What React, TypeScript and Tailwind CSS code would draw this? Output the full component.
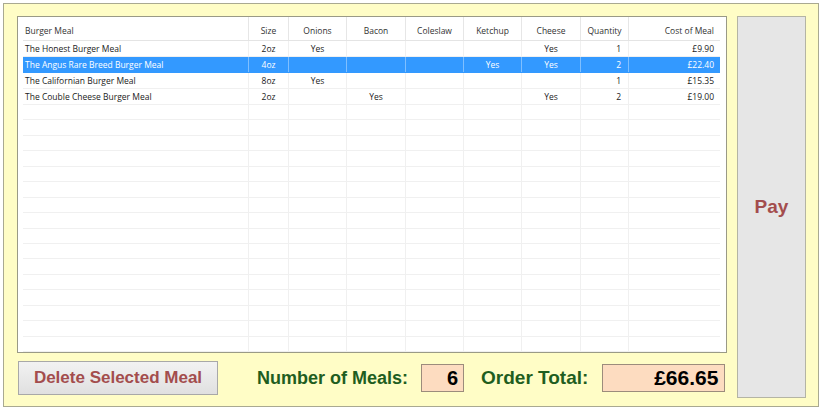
const columns = [
  { label: 'Burger Meal', width: 'w-[226px]', align: 'text-left pl-[2px]' },
  { label: 'Size', width: 'w-[40px]', align: 'text-center' },
  { label: 'Onions', width: 'w-[58px]', align: 'text-center' },
  { label: 'Bacon', width: 'w-[59px]', align: 'text-center' },
  { label: 'Coleslaw', width: 'w-[58px]', align: 'text-center' },
  { label: 'Ketchup', width: 'w-[58px]', align: 'text-center' },
  { label: 'Cheese', width: 'w-[59px]', align: 'text-center' },
  { label: 'Quantity', width: 'w-[48px]', align: 'text-center' },
  { label: 'Cost of Meal', width: 'flex-1', align: 'text-right pr-[6px]' },
];

const cellAlign = [
  'text-left pl-[2px]',
  'text-center',
  'text-center',
  'text-center',
  'text-center',
  'text-center',
  'text-center',
  'text-right pr-[7px]',
  'text-right pr-[6px]',
];

const meals = [
  ['The Honest Burger Meal', '2oz', 'Yes', '', '', '', 'Yes', '1', '£9.90'],
  ['The Angus Rare Breed Burger Meal', '4oz', '', '', '', 'Yes', 'Yes', '2', '£22.40'],
  ['The Californian Burger Meal', '8oz', 'Yes', '', '', '', '', '1', '£15.35'],
  ['The Couble Cheese Burger Meal', '2oz', '', 'Yes', '', '', 'Yes', '2', '£19.00'],
];

const selected = 1;
const totalRows = 20;

function MealGrid() {
  const rows = Array.from({ length: totalRows }, (_, i) => meals[i] ?? Array(9).fill(''));
  return (
    <div className="h-[337px] flex flex-col border border-[#9a9a86] bg-white pl-[5px] pr-[6px] text-[8.5px] font-['Open_Sans',sans-serif]">
      <div className="h-[24px] flex border-b border-[#e4e4e4] text-[#333]">
        {columns.map((c, i) => (
          <div
            key={c.label}
            className={`${c.width} ${c.align} flex items-center pt-[5px] ${i === 0 ? '' : i === columns.length - 1 ? 'justify-end' : 'justify-center'} ${i < columns.length - 1 ? 'border-r border-[#e6e6e6]' : ''}`}
          >
            {c.label}
          </div>
        ))}
      </div>
      <div className="flex-1 flex flex-col">
        {rows.map((row, r) => {
          const isSel = r === selected;
          return (
            <div
              key={r}
              className={`flex-1 flex border-b ${isSel ? 'bg-[#3399ff] text-white border-[#3399ff]' : 'text-[#222] border-[#f0f0f0]'}`}
            >
              {row.map((cell, c) => (
                <div
                  key={c}
                  className={`${columns[c].width} ${cellAlign[c]} leading-[15px] whitespace-nowrap overflow-hidden ${c < 8 ? (isSel ? 'border-r border-[#7fbfff]' : 'border-r border-[#f0f0f0]') : ''}`}
                >
                  {cell}
                </div>
              ))}
            </div>
          );
        })}
      </div>
    </div>
  );
}

export default function App() {
  return (
    <div className="w-[826px] h-[412px] bg-white pt-[3px] pl-[3px] font-['Liberation_Sans',Arial,sans-serif]">
      <div className="w-[816px] h-[404px] border border-[#a9a991] bg-[#fffdc6] flex pl-[13px] pt-[12px]">
        <div className="w-[710px] shrink-0 flex flex-col">
          <MealGrid />
          <div className="flex items-center mt-[8px] whitespace-nowrap">
            <button className="shrink-0 w-[200px] h-[34px] ml-[1px] border border-[#a8a8a8] bg-gradient-to-b from-[#f2f2f2] to-[#e0e0e0] text-[17px] font-bold text-[#a34d4d]">
              Delete Selected Meal
            </button>
            <span className="shrink-0 ml-[39px] text-[18px] font-bold text-[#1f5e1f]">Number of Meals:</span>
            <div className="shrink-0 ml-[13px] w-[43px] h-[28px] border border-[#9c8c7c] bg-[#fddcc0] flex items-center justify-end pr-[5px] text-[20px] font-bold text-black">
              6
            </div>
            <span className="shrink-0 ml-[17px] text-[19px] font-bold text-[#1f5e1f]">Order Total:</span>
            <div className="shrink-0 ml-[14px] w-[123px] h-[28px] border border-[#9c8c7c] bg-[#fddcc0] flex items-center justify-end pr-[6px] text-[21px] font-bold text-black">
              £66.65
            </div>
          </div>
        </div>
        <button className="shrink-0 ml-[10px] w-[69px] h-[382px] border border-[#b4b4a4] bg-[#e6e6e6] text-[19px] font-bold text-[#a34d4d]">
          Pay
        </button>
      </div>
    </div>
  );
}
